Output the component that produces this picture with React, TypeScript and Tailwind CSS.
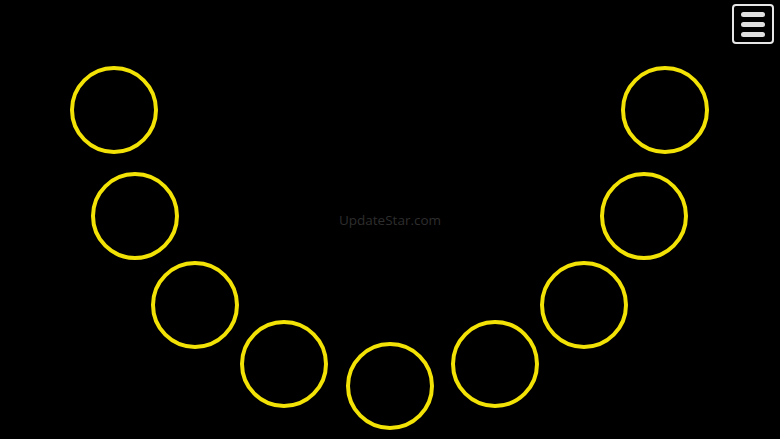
const rings = [
  { x: 114, y: 110 },
  { x: 135, y: 216 },
  { x: 195, y: 305 },
  { x: 284, y: 364 },
  { x: 390, y: 386 },
  { x: 495, y: 364 },
  { x: 584, y: 305 },
  { x: 644, y: 216 },
  { x: 665, y: 110 },
];

export default function App() {
  return (
    <div className="relative h-[439px] w-[780px] overflow-hidden bg-black font-['Open_Sans',sans-serif]">
      {/* menu button */}
      <button className="absolute right-[6px] top-[4px] flex h-[40px] w-[42px] flex-col items-center justify-center gap-[5px] rounded-[4px] border-2 border-[#e6e6e6]">
        <span className="h-[5px] w-[24px] rounded-full bg-[#e0e0e0]" />
        <span className="h-[5px] w-[24px] rounded-full bg-[#e0e0e0]" />
        <span className="h-[5px] w-[24px] rounded-full bg-[#e0e0e0]" />
      </button>

      {/* watermark */}
      <div className="flex h-full items-center justify-center pt-[2px] text-[13.5px] text-[#2e2e2e]">
        UpdateStar.com
      </div>

      {/* ring arc */}
      {rings.map((r, i) => (
        <div
          key={i}
          className="absolute h-[88px] w-[88px] -translate-x-1/2 -translate-y-1/2 rounded-full border-[4px] border-[#f2e205]"
          style={{ left: r.x, top: r.y }}
        />
      ))}
    </div>
  );
}
